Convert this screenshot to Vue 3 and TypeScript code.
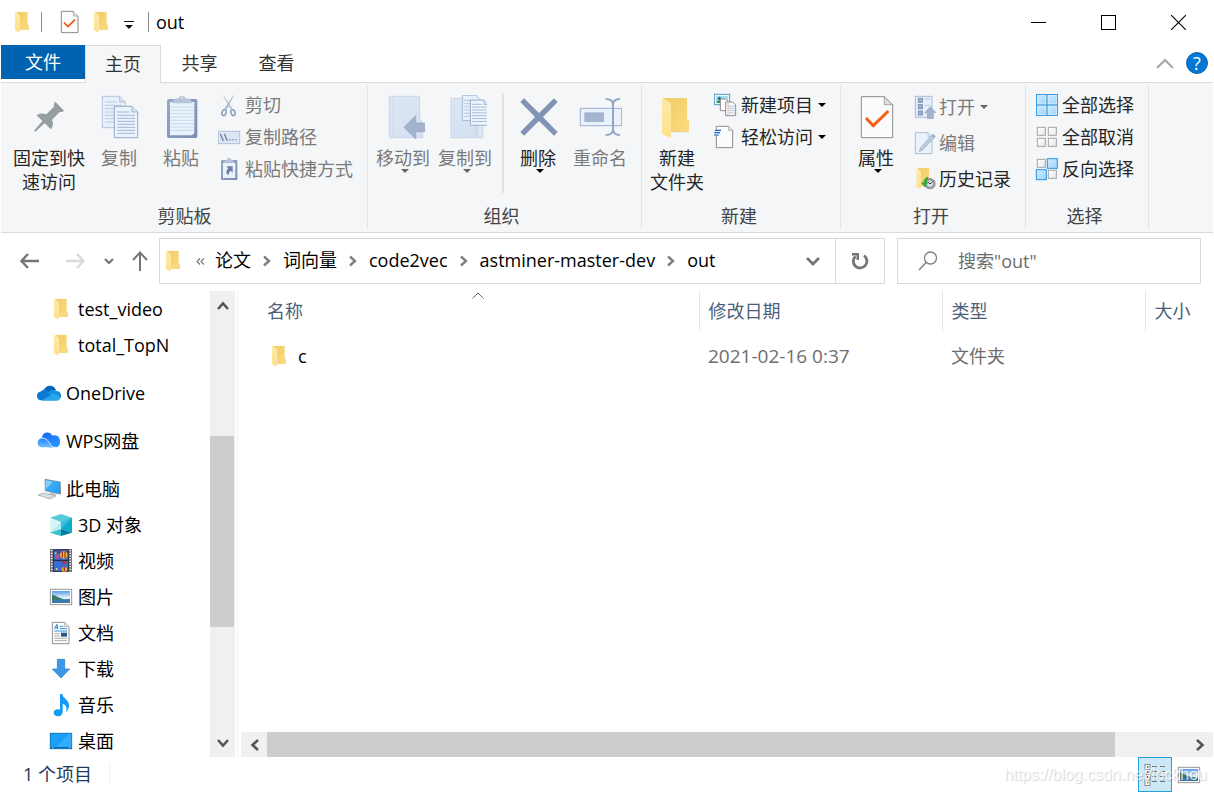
<script setup lang="ts">
import { ref } from 'vue'

interface SmallCommand {
  icon: string
  label: string
  disabled?: boolean
  menu?: boolean
}

interface NavItem {
  icon: string
  label: string
  root?: boolean
}

interface Entry {
  name: string
  modified: string
  type: string
  size: string
}

const tabs = ['主页', '共享', '查看']
const activeTab = ref('主页')

const clipboardCommands: SmallCommand[] = [
  { icon: 'cut', label: '剪切', disabled: true },
  { icon: 'copy-path', label: '复制路径', disabled: true },
  { icon: 'paste-link', label: '粘贴快捷方式', disabled: true },
]
const newCommands: SmallCommand[] = [
  { icon: 'new-item', label: '新建项目', menu: true },
  { icon: 'easy-access', label: '轻松访问', menu: true },
]
const openCommands: SmallCommand[] = [
  { icon: 'open', label: '打开', disabled: true, menu: true },
  { icon: 'edit', label: '编辑', disabled: true },
  { icon: 'history', label: '历史记录' },
]
const selectCommands: SmallCommand[] = [
  { icon: 'select-all', label: '全部选择' },
  { icon: 'select-none', label: '全部取消' },
  { icon: 'select-invert', label: '反向选择' },
]

const crumbs = ['论文', '词向量', 'code2vec', 'astminer-master-dev', 'out']
const query = ref('')
const searchHint = '搜索"out"'

const navItems: NavItem[] = [
  { icon: 'folder-nav', label: 'test_video' },
  { icon: 'folder-nav', label: 'total_TopN' },
  { icon: 'onedrive', label: 'OneDrive', root: true },
  { icon: 'wps', label: 'WPS网盘', root: true },
  { icon: 'pc', label: '此电脑', root: true },
  { icon: 'cube', label: '3D 对象' },
  { icon: 'video', label: '视频' },
  { icon: 'picture', label: '图片' },
  { icon: 'document', label: '文档' },
  { icon: 'download', label: '下载' },
  { icon: 'music', label: '音乐' },
  { icon: 'desktop', label: '桌面' },
]

const entries: Entry[] = [
  { name: 'c', modified: '2021-02-16 0:37', type: '文件夹', size: '' },
]
const view = ref<'details' | 'thumbs'>('details')
</script>

<template>
  <div class="window">
    <svg class="sprite" aria-hidden="true">
      <defs>
        <linearGradient id="g-body" x1="0" y1="0" x2="1" y2="1">
          <stop offset="0" stop-color="#f0cb62" /><stop offset="1" stop-color="#fbdc82" />
        </linearGradient>
        <linearGradient id="g-flap" x1="0" y1="0" x2="0" y2="1">
          <stop offset="0" stop-color="#fde9a6" /><stop offset="1" stop-color="#ffe18b" />
        </linearGradient>
        <linearGradient id="g-pale" x1="0" y1="0" x2="1" y2="1">
          <stop offset="0" stop-color="#dde8f5" /><stop offset="1" stop-color="#d3dfef" />
        </linearGradient>
        <linearGradient id="g-board" x1="0" y1="0" x2="1" y2="1">
          <stop offset="0" stop-color="#97a8c8" /><stop offset="1" stop-color="#7a8db2" />
        </linearGradient>
        <linearGradient id="g-cell" x1="0" y1="0" x2="1" y2="1">
          <stop offset="0" stop-color="#cdeaff" /><stop offset="1" stop-color="#9fd5fc" />
        </linearGradient>
        <linearGradient id="g-blank" x1="0" y1="0" x2="1" y2="1">
          <stop offset="0" stop-color="#ffffff" /><stop offset="1" stop-color="#e8e8e8" />
        </linearGradient>
        <linearGradient id="g-wps" x1="0" y1="0" x2="1" y2="1">
          <stop offset="0" stop-color="#1267f5" /><stop offset="1" stop-color="#2b9bff" />
        </linearGradient>
        <linearGradient id="g-wps2" x1="0" y1="0" x2="0" y2="1">
          <stop offset="0" stop-color="#2585ff" /><stop offset="1" stop-color="#6cc0ff" />
        </linearGradient>
        <linearGradient id="g-screen" x1="0" y1="0" x2="1" y2="1">
          <stop offset="0" stop-color="#4db6f5" /><stop offset="1" stop-color="#1aa0f5" />
        </linearGradient>
        <linearGradient id="g-sky" x1="0" y1="0" x2="0" y2="1">
          <stop offset="0" stop-color="#5b9bea" /><stop offset="0.55" stop-color="#e2f2fb" /><stop offset="1" stop-color="#b9dcf0" />
        </linearGradient>
      </defs>

      <symbol id="i-folder" viewBox="0 0 42 63">
        <path d="M3 0H38V36L42 42V54H14V12Z" fill="url(#g-body)" />
        <path d="M0 0L12 8C14 10 14 11 14 14V57C14 61 12 63 10 62L0 56Z" fill="url(#g-flap)" />
        <path d="M14 54H42" stroke="#e8c674" stroke-width="1" />
      </symbol>
      <symbol id="i-folder-nav" viewBox="0 0 72 72">
        <use href="#i-folder" x="15" y="5" width="42" height="63" />
      </symbol>

      <symbol id="i-doc-check" viewBox="171 36 72 72">
        <path d="M184 40H220L234 54V104H184Z" fill="#fcfcfc" stroke="#8a8a8a" stroke-width="3" />
        <path d="M220 40V54H234" fill="#e4e4e4" stroke="#999" stroke-width="2" />
        <path d="M192 74L204 86L225 65" fill="none" stroke="#f0560f" stroke-width="5" />
      </symbol>

      <symbol id="i-pin" viewBox="81 33 132 132">
        <path d="M166 53L192 80C188 84 184 84 179 84L156 107C160 117 160 127 153 136L134 118L106 143L102 140L127 111L110 94C119 87 129 88 139 91L162 68C161 62 162 57 166 53Z" fill="#959ea2" />
      </symbol>

      <symbol id="i-copy" viewBox="291 33 132 132">
        <path d="M307 37H359L376 54V131H307Z" fill="#e6effa" stroke="#a9bbda" stroke-width="2.5" />
        <path d="M359 37V54H376" fill="#d3e0f2" stroke="#a9bbda" stroke-width="2.5" />
        <path d="M315 54H352M315 64H368M315 74H368M315 84H342M315 94H342M315 104H342M315 114H342" stroke="#b5c5df" stroke-width="2.5" />
        <path d="M343 67H396L413 84V161H343Z" fill="#ebf3fc" stroke="#94a9cb" stroke-width="3" />
        <path d="M396 67V84H413" fill="#d8e4f4" stroke="#94a9cb" stroke-width="2.5" />
        <path d="M352 84H388M352 94H405M352 103H405M352 112H405M352 121H405M352 130H405M352 139H405M352 148H405" stroke="#94a9cb" stroke-width="2.5" />
      </symbol>

      <symbol id="i-paste" viewBox="477 33 132 132">
        <rect x="501" y="45" width="91" height="117" rx="5" fill="url(#g-board)" />
        <path d="M510 54H583V148L576 154H510Z" fill="#eaf2fb" />
        <path d="M511 69H582M511 79H582M511 89H582M511 99H582M511 109H582M511 119H582M511 129H582M511 139H582" stroke="#cad8ea" stroke-width="3" />
        <path d="M516 58C517 47 528 43 536 43C536 34 556 34 556 43C565 43 576 47 577 58Z" fill="#b7c4d9" />
        <circle cx="546" cy="42" r="3" fill="#e2e9f3" />
      </symbol>

      <symbol id="i-cut" viewBox="654 27 72 72">
        <path d="M667 31L692 77L697 73L674 39Z" fill="#b8c5d8" />
        <path d="M704 31L679 77L674 73L697 39Z" fill="#a5b5cf" />
        <ellipse cx="672" cy="86" rx="6" ry="9" transform="rotate(18 672 86)" fill="none" stroke="#8fa2c4" stroke-width="5" />
        <ellipse cx="699" cy="86" rx="6" ry="9" transform="rotate(-18 699 86)" fill="none" stroke="#8fa2c4" stroke-width="5" />
      </symbol>

      <symbol id="i-copy-path" viewBox="654 123 72 72">
        <rect x="655" y="142" width="64" height="37" fill="#dce7f5" stroke="#b3c2db" stroke-width="3" />
        <path d="M661 149L670 171M673 149L682 171" stroke="#71819f" stroke-width="4" />
        <path d="M688 167H692M697 167H701M706 167H710" stroke="#71819f" stroke-width="4" />
      </symbol>

      <symbol id="i-paste-link" viewBox="654 219 72 72">
        <rect x="663" y="228" width="49" height="60" rx="3" fill="url(#g-board)" />
        <rect x="669" y="237" width="37" height="45" fill="#eaf2fb" />
        <path d="M671 236C673 230 680 228 682 226C682 220 692 220 692 226C695 228 702 230 704 236Z" fill="#b7c4d9" />
        <path d="M679 247H698V266L692 260C687 264 686 268 687 273C677 270 676 262 685 253Z" fill="#6d80a6" />
      </symbol>

      <symbol id="i-move-to" viewBox="42 33 132 132">
        <path d="M67 37H158V105L167 116V161H67Z" fill="url(#g-pale)" stroke="#c2d1e6" stroke-width="2.5" />
        <path d="M78 38V160" stroke="#cddaec" stroke-width="2" />
        <path d="M111 130L146 95V117H183V143H146V165Z" fill="#a3b3cf" stroke="#93a5c5" stroke-width="2" />
      </symbol>

      <symbol id="i-copy-to" viewBox="231 27 132 138">
        <path d="M253 37H334V161H253Z" fill="url(#g-pale)" stroke="#c2d1e6" stroke-width="2.5" />
        <path d="M334 110H353V161H334Z" fill="#dbe6f3" stroke="#c2d1e6" stroke-width="2.5" />
        <path d="M264 38V160" stroke="#cddaec" stroke-width="2" />
        <path d="M289 28H332L345 42V107H289Z" fill="#e6effa" stroke="#a9bbda" stroke-width="3" />
        <path d="M295 44H325M295 54H312M295 64H312M295 74H312M295 84H312M295 94H312" stroke="#a9bbda" stroke-width="2.5" />
        <path d="M314 43H357L371 57V122H314Z" fill="#f0f6fd" stroke="#94a9cb" stroke-width="3" />
        <path d="M357 43V57H371" fill="#d8e4f4" stroke="#94a9cb" stroke-width="2.5" />
        <path d="M319 56H350M319 65H365M319 74H365M319 83H365M319 92H365M319 101H365M319 110H365" stroke="#94a9cb" stroke-width="2.5" />
      </symbol>

      <symbol id="i-delete" viewBox="450 33 132 132">
        <path d="M463 54L474 43L519 87L564 43L575 54L531 99L575 144L564 155L519 111L474 155L463 144L507 99Z" fill="#8294b6" />
      </symbol>

      <symbol id="i-rename" viewBox="636 33 132 132">
        <rect x="643" y="73" width="124" height="52" fill="#e9f2fc" stroke="#9fb1d0" stroke-width="3" />
        <rect x="655" y="85" width="59" height="29" fill="#a5b4d0" />
        <path d="M719 45C734 45 741 50 741 62C741 50 748 45 762 45M741 60V138M719 153C734 153 741 148 741 136C741 148 748 153 762 153" fill="none" stroke="#94a6c6" stroke-width="6" />
      </symbol>

      <symbol id="i-new-folder" viewBox="45 33 132 132">
        <path d="M68 42H141V105L147 110V143H92V65Z" fill="url(#g-body)" />
        <path d="M66 42L88 55C92 58 93 61 93 66V158C92 162 89 162 86 160L66 149Z" fill="url(#g-flap)" />
        <path d="M93 143H147" stroke="#e8c674" stroke-width="2" />
      </symbol>

      <symbol id="i-new-item" viewBox="222 27 72 72">
        <rect x="223" y="31" width="46" height="31" fill="#eef8fc" stroke="#4e9cb8" stroke-width="3" />
        <rect x="228" y="36" width="36" height="21" fill="#a8dcee" />
        <circle cx="238" cy="43" r="5" fill="#2b6a86" /><path d="M230 57C230 46 246 46 246 57Z" fill="#348a56" />
        <path d="M241 45H257L265 53V80H241Z" fill="#fff" stroke="#8a8a8a" stroke-width="3" />
        <path d="M257 54H278L287 63V95H257Z" fill="#fff" stroke="#8a8a8a" stroke-width="3" />
        <path d="M266 66H284M266 73H284M266 80H284M266 87H284" stroke="#8db4e0" stroke-width="2.5" />
        <path d="M264 57V93" stroke="#e88a8a" stroke-width="2" />
      </symbol>

      <symbol id="i-easy-access" viewBox="222 123 72 72">
        <path d="M229 127H266L278 139V191H229Z" fill="#fcfcfc" stroke="#8a8a8a" stroke-width="3" />
        <path d="M266 127V139H278" fill="#e4e4e4" stroke="#999" stroke-width="2" />
        <path d="M226 137H244V154H226Z" fill="#f5f6f7" />
        <path d="M225 139H243M223 146H240M222 153H237" stroke="#1169bd" stroke-width="3.5" />
      </symbol>

      <symbol id="i-properties" viewBox="642 33 132 132">
        <path d="M664 38H733L758 62V161H664Z" fill="#fbfbfb" stroke="#8e8e8e" stroke-width="3" />
        <path d="M733 38V62H758Z" fill="#dcdcdc" stroke="#9a9a9a" stroke-width="2.5" />
        <path d="M678 102L700 125L745 81" fill="none" stroke="#f45d12" stroke-width="9" />
      </symbol>

      <symbol id="i-open" viewBox="42 36 72 72">
        <rect x="46" y="40" width="50" height="63" fill="#e6effa" stroke="#a9bbda" stroke-width="3" />
        <g fill="#a3b3cf" stroke="#7d90b3" stroke-width="3">
          <rect x="55" y="46" width="12" height="12" /><rect x="55" y="65" width="12" height="12" /><rect x="55" y="84" width="12" height="12" />
        </g>
        <path d="M74 48H90M74 67H90" stroke="#b5c5df" stroke-width="3" />
        <path d="M91 71L108 89H100V107H82V89H74Z" fill="#a3b3cf" stroke="#93a5c5" stroke-width="2" />
      </symbol>

      <symbol id="i-edit" viewBox="42 141 72 72">
        <path d="M46 146H84L96 158V209H46Z" fill="#eaf2fb" stroke="#a9bbda" stroke-width="3" />
        <path d="M84 146V158H96" fill="#d8e4f4" stroke="#a9bbda" stroke-width="2" />
        <path d="M58 203L61 192L95 154L103 161L69 197Z" fill="#bccade" stroke="#9db0cc" stroke-width="2" />
        <path d="M95 154L99 150L107 157L103 161Z" fill="#92a5c7" />
      </symbol>

      <symbol id="i-history" viewBox="42 249 72 72">
        <use href="#i-folder" x="49" y="252" width="42" height="63" />
        <circle cx="90" cy="299" r="17" fill="#969a9e" />
        <circle cx="90" cy="299" r="11" fill="#dfe3e5" stroke="#70757a" stroke-width="2" />
        <path d="M84 294L90 300L98 293" fill="none" stroke="#333" stroke-width="3" />
        <path d="M84 279C75 281 71 288 71 296H64L74 309L84 296H78C78 291 80 287 84 285Z" fill="#2fb43a" stroke="#1d8d2b" stroke-width="1" />
      </symbol>

      <symbol id="i-select-all" viewBox="408 27 72 72">
        <rect x="411" y="30" width="66" height="66" fill="#3d9be2" />
        <g fill="url(#g-cell)" stroke="#e9f6ff" stroke-width="2">
          <rect x="415" y="34" width="26" height="26" /><rect x="447" y="34" width="26" height="26" />
          <rect x="415" y="66" width="26" height="26" /><rect x="447" y="66" width="26" height="26" />
        </g>
      </symbol>
      <symbol id="i-select-none" viewBox="408 123 72 72">
        <g fill="url(#g-blank)" stroke="#a4a4a4" stroke-width="3">
          <rect x="415" y="130" width="24" height="24" /><rect x="448" y="130" width="24" height="24" />
          <rect x="415" y="163" width="24" height="24" /><rect x="448" y="163" width="24" height="24" />
        </g>
      </symbol>
      <symbol id="i-select-invert" viewBox="408 219 72 72">
        <g fill="url(#g-blank)" stroke="#a4a4a4" stroke-width="3">
          <rect x="415" y="226" width="24" height="24" /><rect x="448" y="259" width="24" height="24" />
        </g>
        <g fill="url(#g-cell)" stroke="#2e93e0" stroke-width="3">
          <rect x="445" y="224" width="30" height="29" /><rect x="412" y="257" width="30" height="30" />
        </g>
      </symbol>

      <symbol id="i-onedrive" viewBox="111 273 72 72">
        <path d="M131 301C137 283 162 282 168 300L150 312L126 304Z" fill="#0364b8" />
        <path d="M124 331C106 331 107 305 124 304C131 297 141 299 146 305L172 317L150 331Z" fill="#0f78d4" />
        <path d="M146 305C154 295 166 300 168 303C180 301 186 313 182 324L172 326L141 308Z" fill="#1490df" />
        <path d="M124 332L160 310L182 322C180 329 176 332 171 332Z" fill="#28a8ea" />
      </symbol>
      <symbol id="i-wps" viewBox="111 417 72 72">
        <path d="M126 444C127 423 152 423 157 437C171 433 181 442 180 456C180 466 174 472 166 472H146Z" fill="url(#g-wps)" />
        <path d="M127 472C108 472 109 446 126 445C138 443 145 452 150 461C154 468 158 472 166 472Z" fill="url(#g-wps2)" />
        <path d="M126 445C138 443 145 452 150 461C154 468 158 472 166 472" fill="none" stroke="#fff" stroke-width="2.5" />
      </symbol>
      <symbol id="i-pc" viewBox="111 561 72 72">
        <path d="M135 568L181 576L180 612L136 602Z" fill="url(#g-screen)" stroke="#5f7f94" stroke-width="2" />
        <path d="M182 577L183 612L180 613Z" fill="#77828a" />
        <path d="M137 571L158 575L137 597Z" fill="#86d0fa" />
        <path d="M150 606L160 609L172 614L160 617L146 611Z" fill="#bcc4ca" />
        <path d="M114 615L132 609L168 618L150 627Z" fill="#c9d0d6" stroke="#9ca6ad" stroke-width="2" />
        <path d="M122 615L154 622M129 612L160 619" stroke="#eef2f4" stroke-width="2" />
      </symbol>
      <symbol id="i-cube" viewBox="147 39 72 72">
        <path d="M150 53L183 42L216 53L183 67Z" fill="#55c9dc" />
        <path d="M150 53L183 67V87L150 98Z" fill="#b5ebef" />
        <path d="M216 53L183 67V87L216 98Z" fill="#0cabd0" />
        <path d="M150 98L183 87V108Z" fill="#34c0cc" /><path d="M216 98L183 87V108Z" fill="#07799b" />
        <path d="M150 53L183 67L150 98Z" fill="#d8f5f5" />
        <path d="M216 53L183 87V67Z" fill="#35bddc" />
      </symbol>
      <symbol id="i-video" viewBox="147 147 72 72">
        <rect x="150" y="147" width="66" height="69" fill="#686868" />
        <path d="M155 150V215M211 150V215" stroke="#f4f4f4" stroke-width="5" stroke-dasharray="4 4" />
        <rect x="161" y="149" width="44" height="65" fill="#3b6bd0" stroke="#222" stroke-width="2" />
        <rect x="161" y="149" width="44" height="13" fill="#3f4f9c" />
        <circle cx="191" cy="165" r="11" fill="#e9be25" />
        <path d="M187 155V175M195 155V175" stroke="#b3392d" stroke-width="4" />
        <circle cx="171" cy="170" r="6" fill="#d8457a" /><circle cx="167" cy="160" r="3" fill="#e8d86a" />
        <path d="M161 181H205" stroke="#222" stroke-width="3" />
        <path d="M186 183H200L195 193H190Z" fill="#b52f3c" />
        <circle cx="193" cy="208" r="8" fill="#e8b42b" /><path d="M193 200V214" stroke="#a43030" stroke-width="4" />
        <circle cx="170" cy="207" r="3" fill="#e8d86a" />
      </symbol>
      <symbol id="i-picture" viewBox="147 255 72 72">
        <rect x="151" y="268" width="64" height="46" fill="#fff" stroke="#979797" stroke-width="3" />
        <rect x="156" y="273" width="54" height="36" fill="url(#g-sky)" />
        <path d="M156 284C168 286 178 294 194 299L156 301Z" fill="#39795c" />
        <path d="M156 299L210 297V309H156Z" fill="#3b7aa8" />
      </symbol>
      <symbol id="i-document" viewBox="147 363 72 72">
        <path d="M157 367H194L207 380V431H157Z" fill="#fdfdfd" stroke="#8f8f8f" stroke-width="3" />
        <path d="M194 367V380H207" fill="#e4e4e4" stroke="#999" stroke-width="2" />
        <path d="M163 387L171 373L173 387M166 383H173" fill="none" stroke="#1883d7" stroke-width="3" />
        <path d="M179 379H190M179 386H201M163 393H201" stroke="#2b93dd" stroke-width="3" />
        <path d="M163 401H179M163 408H179M163 415H201M163 422H201" stroke="#9b9b9b" stroke-width="2.5" />
        <rect x="183" y="398" width="18" height="12" fill="#29598f" />
      </symbol>
      <symbol id="i-download" viewBox="147 471 72 72">
        <path d="M172 478H194V507H209L183 534L157 507H172Z" fill="#3b97e8" stroke="#2377c4" stroke-width="2" />
      </symbol>
      <symbol id="i-music" viewBox="147 579 72 72">
        <path d="M180 582H187C188 596 208 599 207 617C207 626 202 632 197 636C203 622 198 614 188 611V635C188 653 161 652 161 638C161 629 172 625 180 629Z" fill="#119bf5" />
      </symbol>
      <symbol id="i-desktop" viewBox="147 687 72 72">
        <rect x="151" y="700" width="64" height="46" fill="#1aa0fb" stroke="#0b73bd" stroke-width="3" />
        <path d="M168 740L208 701H214V740Z" fill="#35acfc" />
        <path d="M152 743H214" stroke="#0b5f9e" stroke-width="3" /><path d="M156 743H160M206 743H211" stroke="#fff" stroke-width="2" />
      </symbol>
    </svg>

    <header class="titlebar">
      <svg class="ico"><use href="#i-folder-nav" /></svg>
      <span class="bar"></span>
      <button class="quick" aria-label="属性"><svg class="ico"><use href="#i-doc-check" /></svg></button>
      <button class="quick" aria-label="新建文件夹"><svg class="ico"><use href="#i-folder-nav" /></svg></button>
      <button class="quick customize" aria-label="自定义快速访问工具栏">
        <svg width="10" height="8" viewBox="0 0 10 8"><path d="M0 0H10V1H0ZM1 4H9L5 8Z" fill="#111" /></svg>
      </button>
      <span class="bar"></span>
      <h1>out</h1>
      <div class="win-buttons">
        <button aria-label="最小化"><svg width="15" height="15"><path d="M0 7.5H15" stroke="#000" /></svg></button>
        <button aria-label="最大化"><svg width="15" height="15"><rect x=".5" y=".5" width="14" height="14" fill="none" stroke="#000" /></svg></button>
        <button aria-label="关闭"><svg width="15" height="15"><path d="M0 0L15 15M15 0L0 15" stroke="#000" stroke-width="1.1" /></svg></button>
      </div>
    </header>

    <nav class="tabs" aria-label="功能区">
      <button class="tab file">文件</button>
      <button v-for="t in tabs" :key="t" class="tab" :class="{ active: t === activeTab }" @click="activeTab = t">{{ t }}</button>
      <div class="tab-end">
        <button aria-label="最小化功能区"><svg width="18" height="11"><path d="M1 10L9 2L17 10" fill="none" stroke="#a6a6a6" stroke-width="2" /></svg></button>
        <button class="help" aria-label="帮助">?</button>
      </div>
    </nav>

    <section class="ribbon">
      <div class="group clip">
        <div class="commands">
          <button class="large wide"><svg><use href="#i-pin" /></svg><span>固定到快<br>速访问</span></button>
          <button class="large" disabled><svg><use href="#i-copy" /></svg><span>复制</span></button>
          <button class="large" disabled><svg><use href="#i-paste" /></svg><span>粘贴</span></button>
          <div class="small-list">
            <button v-for="c in clipboardCommands" :key="c.icon" class="small" :disabled="c.disabled">
              <svg class="ico"><use :href="'#i-' + c.icon" /></svg>{{ c.label }}
            </button>
          </div>
        </div>
        <div class="caption">剪贴板</div>
      </div>

      <div class="group organize">
        <div class="commands">
          <button class="large" disabled><svg><use href="#i-move-to" /></svg><span>移动到</span><i class="drop"></i></button>
          <button class="large" disabled><svg><use href="#i-copy-to" /></svg><span>复制到</span><i class="drop"></i></button>
          <span class="divider"></span>
          <button class="large"><svg><use href="#i-delete" /></svg><span>删除</span><i class="drop"></i></button>
          <button class="large" disabled><svg><use href="#i-rename" /></svg><span>重命名</span></button>
        </div>
        <div class="caption">组织</div>
      </div>

      <div class="group create">
        <div class="commands">
          <button class="large"><svg><use href="#i-new-folder" /></svg><span>新建<br>文件夹</span></button>
          <div class="small-list">
            <button v-for="c in newCommands" :key="c.icon" class="small">
              <svg class="ico"><use :href="'#i-' + c.icon" /></svg>{{ c.label }}<i class="drop"></i>
            </button>
          </div>
        </div>
        <div class="caption">新建</div>
      </div>

      <div class="group open">
        <div class="commands">
          <button class="large"><svg><use href="#i-properties" /></svg><span>属性</span><i class="drop"></i></button>
          <div class="small-list roomy">
            <button v-for="c in openCommands" :key="c.icon" class="small" :disabled="c.disabled">
              <svg class="ico"><use :href="'#i-' + c.icon" /></svg>{{ c.label }}<i v-if="c.menu" class="drop"></i>
            </button>
          </div>
        </div>
        <div class="caption">打开</div>
      </div>

      <div class="group select">
        <div class="commands">
          <div class="small-list">
            <button v-for="c in selectCommands" :key="c.icon" class="small">
              <svg class="ico"><use :href="'#i-' + c.icon" /></svg>{{ c.label }}
            </button>
          </div>
        </div>
        <div class="caption">选择</div>
      </div>
    </section>

    <div class="location">
      <div class="history">
        <button aria-label="后退"><svg width="20" height="16"><path d="M19 8H2M8 1L1.5 8L8 15" fill="none" stroke="#757575" stroke-width="2.4" /></svg></button>
        <button aria-label="前进" disabled><svg width="20" height="16"><path d="M0 8H17M11 1L17.5 8L11 15" fill="none" stroke="#dadada" stroke-width="2.4" /></svg></button>
        <button class="recent" aria-label="最近位置"><svg width="10" height="7"><path d="M1 1L5 5L9 1" fill="none" stroke="#757575" stroke-width="2.2" /></svg></button>
        <button class="up" aria-label="向上"><svg width="16" height="20"><path d="M8 20V2M1 9L8 1.5L15 9" fill="none" stroke="#757575" stroke-width="2" /></svg></button>
      </div>
      <div class="address">
        <svg class="ico"><use href="#i-folder-nav" /></svg>
        <button class="more" aria-label="更多位置"><svg width="9" height="7"><path d="M4 .5L1 3.5L4 6.5M8 .5L5 3.5L8 6.5" fill="none" stroke="#777" stroke-width="1.2" /></svg></button>
        <template v-for="(c, i) in crumbs" :key="c">
          <svg v-if="i" class="sep" width="8" height="12"><path d="M1 1.5L6 6L1 10.5" fill="none" stroke="#808080" stroke-width="2.4" /></svg>
          <a href="#" @click.prevent>{{ c }}</a>
        </template>
        <button class="expand" aria-label="以前的位置"><svg width="14" height="9"><path d="M1 1L7 7L13 1" fill="none" stroke="#757575" stroke-width="2.8" /></svg></button>
        <button class="refresh" aria-label="刷新">
          <svg width="18" height="18"><path d="M4.5 4.2A6.8 6.8 0 1 0 13 3.6" fill="none" stroke="#757575" stroke-width="2.8" /><path d="M1 1H8V8H5.500V3.500H1Z" fill="#757575" /></svg>
        </button>
      </div>
      <label class="search">
        <svg width="20" height="20"><circle cx="12.500" cy="7" r="6" fill="none" stroke="#808080" stroke-width="1.3" /><path d="M8.300 11.300L1 19" stroke="#808080" stroke-width="1.5" /></svg>
        <input v-model="query" type="text" :placeholder="searchHint" aria-label="搜索">
      </label>
    </div>

    <main>
      <nav class="tree" aria-label="导航窗格">
        <a v-for="n in navItems" :key="n.label" href="#" :class="{ root: n.root }" @click.prevent>
          <svg class="ico"><use :href="'#i-' + n.icon" /></svg>{{ n.label }}
        </a>
      </nav>
      <div class="vscroll">
        <button aria-label="向上滚动"><svg width="12" height="9"><path d="M1 8L6 2.500L11 8" fill="none" stroke="#555" stroke-width="2.600" /></svg></button>
        <div class="track"><div class="thumb"></div></div>
        <button aria-label="向下滚动"><svg width="12" height="9"><path d="M1 1L6 6.500L11 1" fill="none" stroke="#555" stroke-width="2.600" /></svg></button>
      </div>
      <div class="files">
        <table>
          <colgroup><col><col class="c-date"><col class="c-type"><col class="c-size"></colgroup>
          <thead>
            <tr>
              <th>名称<svg class="sort" width="12" height="7"><path d="M.5 6.500L6 1L11.500 6.500" fill="none" stroke="#6b6b6b" /></svg></th>
              <th>修改日期</th><th>类型</th><th>大小</th>
            </tr>
          </thead>
          <tbody>
            <tr v-for="e in entries" :key="e.name">
              <td><div class="name"><svg class="ico"><use href="#i-folder-nav" /></svg>{{ e.name }}</div></td>
              <td class="date">{{ e.modified }}</td><td>{{ e.type }}</td><td>{{ e.size }}</td>
            </tr>
          </tbody>
        </table>
        <div class="hscroll">
          <button aria-label="向左滚动"><svg width="9" height="12"><path d="M8 1L2.500 6L8 11" fill="none" stroke="#555" stroke-width="2.600" /></svg></button>
          <div class="track"><div class="thumb"></div></div>
          <button aria-label="向右滚动"><svg width="9" height="12"><path d="M1 1L6.500 6L1 11" fill="none" stroke="#555" stroke-width="2.600" /></svg></button>
        </div>
      </div>
    </main>

    <footer>
      <span class="count">1 个项目</span>
      <div class="views">
        <button :aria-pressed="view === 'details'" aria-label="详细信息" @click="view = 'details'">
          <svg width="22" height="22">
            <rect x="1" y=".5" width="5" height="21" fill="#fff" stroke="#888" />
            <path d="M1 5.500H6M1 10.500H6M1 15.500H6" stroke="#999" />
            <path d="M3 3H4.500" stroke="#3a7" stroke-width="2" /><path d="M3 8H4.500" stroke="#36c" stroke-width="2" /><path d="M3 13H4.500" stroke="#c33" stroke-width="2" /><path d="M3 18.500H4.500" stroke="#6a3" stroke-width="2" />
            <path d="M8 2.500H13M16 2.500H21M8 7.500H13M16 7.500H21M8 12.500H13M16 12.500H21M8 17.500H13M16 17.500H21" stroke="#777" />
          </svg>
        </button>
        <button :aria-pressed="view === 'thumbs'" aria-label="大图标" @click="view = 'thumbs'">
          <svg class="ico"><use href="#i-picture" /></svg>
        </button>
      </div>
      <span class="watermark">https://blog.csdn.net/lockhou</span>
    </footer>
  </div>
</template>

<style>
body { margin: 0; background: #fff; }
</style>

<style scoped>
.window {
  box-sizing: border-box;
  height: 100vh;
  padding: 0 1px;
  display: flex;
  flex-direction: column;
  overflow: hidden;
  background: #fff;
  color: #262626;
  font: 400 18px/24px "Open Sans", "Noto Sans CJK SC", sans-serif;
}
.window *, .window *::before { box-sizing: border-box; }
.sprite { position: absolute; width: 0; height: 0; }
button {
  padding: 0; border: 0; background: none; color: inherit; font: inherit;
  display: flex; align-items: center; justify-content: center; flex: none;
}
a { color: inherit; text-decoration: none; }
svg { display: block; flex: none; }
.ico { width: 24px; height: 24px; }

.titlebar { display: flex; align-items: center; height: 44px; margin-bottom: 1px; flex: none; padding-left: 9px; }
.bar { width: 1px; height: 20px; margin: 0 7px; background: #8c8c8c; }
.quick { width: 32px; height: 32px; }
.quick:first-of-type { margin-left: 4px; }
.customize { width: 24px; padding-top: 6px; }
h1 { margin: 0; font: inherit; color: #000; }
.win-buttons { display: flex; margin-left: auto; }
.win-buttons button { width: 70px; height: 44px; }

.tabs { display: flex; height: 38px; flex: none; border-bottom: 1px solid #dadbdc; }
.tab { width: 77px; height: 36px; color: #333; }
.tab.file { width: 84px; height: 34px; background: #0063b1; color: #fff; }
.tab.active { width: 76px; height: 38px; padding-bottom: 2px; border: 1px solid #dadbdc; border-bottom: 0; background: #f5f6f7; }
.tab-end { display: flex; align-items: center; height: 36px; gap: 12px; margin-left: auto; padding-right: 5px; }
.help { width: 22px; height: 22px; border: 1px solid #1565a8; border-radius: 50%; background: #0078d7; color: #fff; line-height: 20px; }

.ribbon { display: flex; height: 150px; flex: none; background: #f5f6f7; border-bottom: 1px solid #dadbdc; }
.group { display: flex; flex-direction: column; padding-left: 4px; border-right: 1px solid #e2e3e4; margin: 3px 0; }
.group.clip { padding: 0 14px 0 9px; }
.group.organize { padding-right: 10px; }
.group.create { padding-right: 14px; }
.group.open { padding-right: 14px; }
.group.select { padding: 0 14px 0 3px; }
.commands { display: flex; flex: 1; align-items: flex-start; }
.caption { height: 24px; margin: 0 -6px 1px 0; text-align: center; color: #444; }
.organize .caption { margin-right: 0; }
.large { width: 62px; flex-direction: column; padding-top: 9px; white-space: nowrap; }
.large.wide { width: 78px; }
.large svg { width: 44px; height: 44px; margin-bottom: 7px; }
.drop { width: 0; height: 0; flex: none; border: 4px solid transparent; border-top-color: #000; border-bottom: 0; }
.large .drop { margin: -1px 0 0 4px; }
button:disabled { color: #7a7a7a; }
button:disabled .drop { border-top-color: #666; }
.divider { width: 2px; height: 100px; margin: 7px 3px 0 6px; background: #e0e1e2; }
.small-list { padding: 3px 0 0 6px; }
.small { height: 32px; gap: 3px; white-space: nowrap; }
.small .drop { margin-left: 2px; }
.roomy { padding: 3px 0 0 7px; }
.roomy .small { height: 36px; gap: 1px; }
.roomy .drop { margin-left: 4px; }

.location { display: flex; flex: none; height: 58px; padding: 5px 12px 7px 0; }
.history { display: flex; align-items: center; width: 158px; padding-left: 19px; }
.history button { width: 20px; height: 32px; margin-right: 26px; }
.history .recent { width: 10px; margin: 0 18px 0 -8px; }
.history .up { width: 16px; margin: 0; }
.address { display: flex; flex: 1; align-items: center; min-width: 0; padding-left: 1px; border: 1px solid #d9d9d9; color: #000; white-space: nowrap; }
.address a { padding-bottom: 2px; }
.more { width: 20px; height: 32px; margin: 0 5px 0 5px; }
.sep { margin: 0 12px; }
.expand { width: 44px; height: 44px; margin-left: auto; }
.refresh { width: 49px; height: 44px; border-left: 1px solid #d9d9d9; }
.search { display: flex; align-items: center; gap: 20px; width: 304px; margin-left: 12px; padding-left: 20px; border: 1px solid #d9d9d9; }
.search input { flex: 1; min-width: 0; height: 32px; padding: 0; border: 0; outline: 0; background: none; font: inherit; color: #222; }
.search input::placeholder { color: #6d6d6d; opacity: 1; }

main { display: flex; flex: 1; min-height: 0; }
.tree { width: 209px; overflow: hidden; color: #000; }
.tree a { display: flex; align-items: center; gap: 5px; height: 36px; padding-left: 48px; white-space: nowrap; }
.tree a.root { padding-left: 36px; margin-top: 12px; }
.vscroll { display: flex; flex-direction: column; width: 25px; background: #f0f0f0; }
.vscroll button { height: 28px; }
.track { display: flex; flex: 1; }
.thumb { background: #cdcdcd; }
.vscroll .track { flex-direction: column; padding-right: 1px; }
.vscroll .track::before { content: ""; flex: 117; }
.vscroll .thumb { flex: 191; }
.vscroll .track::after { content: ""; flex: 102; }
.files { display: flex; flex: 1; flex-direction: column; min-width: 0; margin-left: 2px; padding-left: 3px; border-left: 1px solid #f2f2f2; }
table { width: calc(100% - 16px); margin-left: 16px; border-collapse: collapse; table-layout: fixed; }
.c-date { width: 243px; }
.c-type { width: 203px; }
.c-size { width: 68px; }
th { position: relative; height: 40px; padding: 0 0 0 9px; border-right: 1px solid #e5e5e5; color: #4c607a; font-weight: 400; text-align: left; }
th:last-child { border-right: 0; }
th:first-child { padding-left: 10px; }
.sort { position: absolute; top: 1px; left: 50%; margin-left: -6px; }
td { height: 50px; padding: 0 0 0 9px; color: #6d6d6d; }
td:first-child { padding-left: 10px; }
.date { font-size: 19px; }
.name { display: flex; align-items: center; gap: 7px; color: #000; }
.hscroll { display: flex; height: 25px; margin-top: auto; background: #f0f0f0; }
.hscroll button { width: 26px; }
.hscroll .thumb { flex: 848; }
.hscroll .track::after { content: ""; flex: 72; }

footer { position: relative; display: flex; flex: none; height: 36px; color: #1e395b; }
.count { height: 20px; margin: 7px 0 0 22px; padding-right: 17px; border-right: 1px solid #f0f0f0; line-height: 20px; }
.views { display: flex; margin-left: auto; padding-right: 7px; }
.views button { width: 34px; height: 35px; border: 1px solid transparent; }
.views button[aria-pressed="true"] { border-color: #26a0da; background: #cbe8f6; }
.watermark { position: absolute; right: 6px; top: 6px; color: rgba(255, 255, 255, 0.8); font: 16px/24px "Liberation Sans", Roboto, sans-serif; text-shadow: 1px 1px 1px rgba(0, 0, 0, 0.18); pointer-events: none; }
</style>
